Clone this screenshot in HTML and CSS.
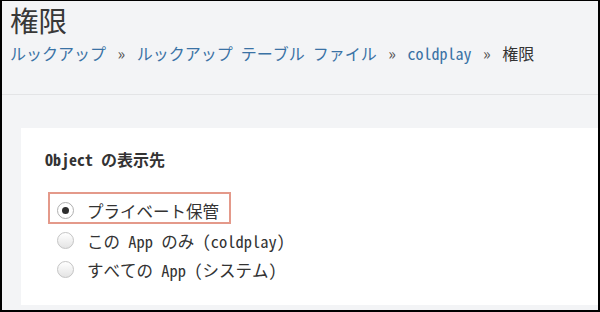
FILE: index.html
```html
<!DOCTYPE html>
<html lang="ja">
<head>
<meta charset="utf-8">
<title>権限</title>
<link rel="stylesheet" href="styles.css">
</head>
<body>
<div class="frame">
  <header class="head">
    <h1 class="title">権限</h1>
    <nav class="crumbs">
      <a class="link" href="#">ルックアップ</a>
      <span class="sep">»</span>
      <a class="link" href="#">ルックアップ テーブル ファイル</a>
      <span class="sep">»</span>
      <a class="link" href="#">coldplay</a>
      <span class="sep">»</span>
      <span class="current">権限</span>
    </nav>
  </header>
  <main class="content">
    <section class="panel">
      <h2 class="label">Object の表示先</h2>
      <div class="options">
        <div class="opt opt-selected"><span class="radio radio-on"></span><span class="opt-text">プライベート保管</span></div>
        <div class="opt"><span class="radio"></span><span class="opt-text">この App のみ (coldplay)</span></div>
        <div class="opt"><span class="radio"></span><span class="opt-text">すべての App (システム)</span></div>
      </div>
    </section>
  </main>
</div>
</body>
</html>
```

FILE: styles.css
```css
html, body {
  margin: 0;
  padding: 0;
  background: #000;
}
body {
  font-family: "Noto Sans Mono CJK JP", "DejaVu Sans Mono", "Noto Sans CJK JP", monospace;
  color: #333;
}
.frame {
  box-sizing: border-box;
  width: 600px;
  height: 312px;
  border-style: solid;
  border-color: #000;
  border-width: 1px 2px 2px 2px;
  background: #f3f4f6;
  display: flex;
  flex-direction: column;
  overflow: hidden;
}
.head {
  box-sizing: border-box;
  height: 94px;
  padding: 2px 0 0 8px;
  border-bottom: 1px solid #e3e4e6;
}
.title {
  margin: 0;
  font-size: 28.5px;
  font-weight: normal;
  line-height: 34px;
  color: #383838;
  font-family: "Noto Sans CJK JP", sans-serif;
}
.crumbs {
  margin-top: 5px;
  font-size: 16px;
  line-height: 22px;
  white-space: nowrap;
}
.link {
  color: #3a72a5;
  text-decoration: none;
}
.sep {
  color: #555;
  margin: 0 3.5px;
}
.current {
  color: #333;
}
.content {
  flex: 1;
  display: flex;
  padding: 33px 0 5px 19px;
}
.panel {
  flex: 1;
  background: #fff;
  padding: 21px 0 0 24px;
}
.label {
  margin: 0;
  font-size: 16px;
  font-weight: bold;
  line-height: 20px;
  color: #333;
}
.options {
  margin: 23px 0 0 3px;
  display: flex;
  flex-direction: column;
  align-items: flex-start;
}
.opt {
  box-sizing: border-box;
  height: 29px;
  display: flex;
  align-items: center;
  gap: 13px;
  padding-left: 9px;
  font-size: 16.5px;
  color: #333;
  white-space: nowrap;
}
.opt-selected {
  height: 32px;
  width: 183px;
  border: 2px solid #e4998a;
  padding: 5px 0 0 7px;
  margin-bottom: 2px;
}
.radio {
  box-sizing: border-box;
  width: 17px;
  height: 17px;
  border-radius: 50%;
  border: 1px solid #c4c4c4;
  background: linear-gradient(#ffffff, #e4e4e4);
  display: flex;
  align-items: center;
  justify-content: center;
  flex: none;
}
.radio-on {
  border-color: #b0b0b0;
  background: #fff;
}
.radio-on::after {
  content: "";
  width: 7px;
  height: 7px;
  border-radius: 50%;
  background: #2e2e2e;
}
```
